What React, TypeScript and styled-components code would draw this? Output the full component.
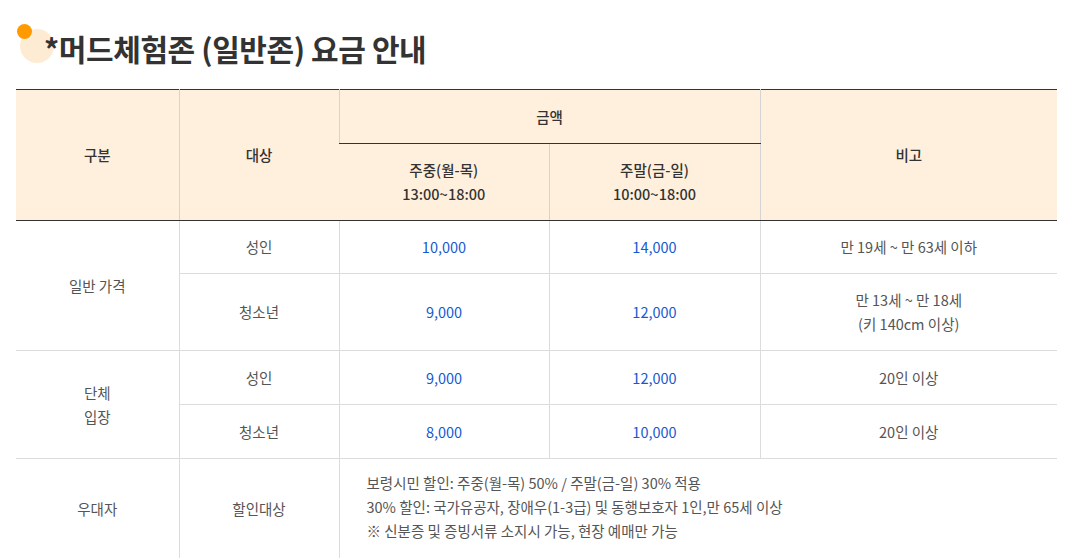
import React from 'react'
import styled, { createGlobalStyle } from 'styled-components'

const GlobalStyle = createGlobalStyle`
  html, body {
    margin: 0;
    padding: 0;
    background: #fff;
    font-family: "Noto Sans CJK KR", "Noto Sans", sans-serif;
  }
`

const Page = styled.div`
  padding: 0 24px 0 16px;
`

const Title = styled.h2`
  position: relative;
  isolation: isolate;
  margin: 0;
  padding: 28px 0 0 28px;
  height: 59px;
  box-sizing: border-box;
  font-size: 30px;
  font-weight: 700;
  letter-spacing: -0.4px;
  line-height: 40px;
  color: #333;
  &::before {
    content: '';
    position: absolute;
    left: 4px;
    top: 29px;
    width: 34px;
    height: 34px;
    border-radius: 50%;
    background: #feebd3;
    z-index: -1;
  }
  &::after {
    content: '';
    position: absolute;
    left: 1px;
    top: 24px;
    width: 15px;
    height: 15px;
    border-radius: 50%;
    background: #ff9a00;
  }
`

const Table = styled.table`
  width: 1041px;
  border-collapse: collapse;
  table-layout: fixed;
  font-size: 14.5px;
  margin-top: 30px;
  border-top: 1px solid #333;
`

const Th = styled.th<{ $h: number }>`
  background: #fff0dd;
  color: #333;
  font-weight: 500;
  height: ${p => p.$h}px;
  padding: 0;
  line-height: 24px;
  border-left: 1px solid #d4d4d4;
  border-bottom: 1px solid #333;
  &:first-child { border-left: none; }
`

const Td = styled.td<{ $h?: number; $price?: boolean; $left?: boolean }>`
  height: ${p => (p.$h ? `${p.$h}px` : 'auto')};
  padding: ${p => (p.$left ? '0 0 4px 27px' : '0')};
  text-align: ${p => (p.$left ? 'left' : 'center')};
  color: ${p => (p.$price ? '#1458d2' : '#555')};
  line-height: 24px;
  border-left: 1px solid #dcdcdc;
  border-bottom: 1px solid #dcdcdc;
`

const FirstTd = styled(Td)`
  border-left: none;
`

type Row = { who: string; wk: string; we: string; note: React.ReactNode; h: number }

const general: Row[] = [
  { who: '성인', wk: '10,000', we: '14,000', note: '만 19세 ~ 만 63세 이하', h: 52 },
  { who: '청소년', wk: '9,000', we: '12,000', note: <>만 13세 ~ 만 18세<br />(키 140cm 이상)</>, h: 76 }
]

const group: Row[] = [
  { who: '성인', wk: '9,000', we: '12,000', note: '20인 이상', h: 53 },
  { who: '청소년', wk: '8,000', we: '10,000', note: '20인 이상', h: 53 }
]

const renderRows = (label: React.ReactNode, rows: Row[]) =>
  rows.map((r, i) => (
    <tr key={r.who}>
      {i === 0 && <FirstTd rowSpan={rows.length}>{label}</FirstTd>}
      <Td $h={r.h}>{r.who}</Td>
      <Td $price>{r.wk}</Td>
      <Td $price>{r.we}</Td>
      <Td>{r.note}</Td>
    </tr>
  ))

export default function App() {
  return (
    <Page>
      <GlobalStyle />
      <Title>*머드체험존 (일반존) 요금 안내</Title>
      <Table>
        <colgroup>
          <col style={{ width: 163 }} />
          <col style={{ width: 160 }} />
          <col style={{ width: 210 }} />
          <col style={{ width: 211 }} />
          <col style={{ width: 297 }} />
        </colgroup>
        <thead>
          <tr>
            <Th rowSpan={2} $h={53}>구분</Th>
            <Th rowSpan={2} $h={53}>대상</Th>
            <Th colSpan={2} $h={53}>금액</Th>
            <Th rowSpan={2} $h={53}>비고</Th>
          </tr>
          <tr>
            <Th $h={76}>주중(월-목)<br />13:00~18:00</Th>
            <Th $h={76}>주말(금-일)<br />10:00~18:00</Th>
          </tr>
        </thead>
        <tbody>
          {renderRows('일반 가격', general)}
          {renderRows(<>단체<br />입장</>, group)}
          <tr>
            <FirstTd $h={100}>우대자</FirstTd>
            <Td>할인대상</Td>
            <Td colSpan={3} $left>
              보령시민 할인: 주중(월-목) 50% / 주말(금-일) 30% 적용<br />
              30% 할인: 국가유공자, 장애우(1-3급) 및 동행보호자 1인,만 65세 이상<br />
              ※ 신분증 및 증빙서류 소지시 가능, 현장 예매만 가능
            </Td>
          </tr>
        </tbody>
      </Table>
    </Page>
  )
}
